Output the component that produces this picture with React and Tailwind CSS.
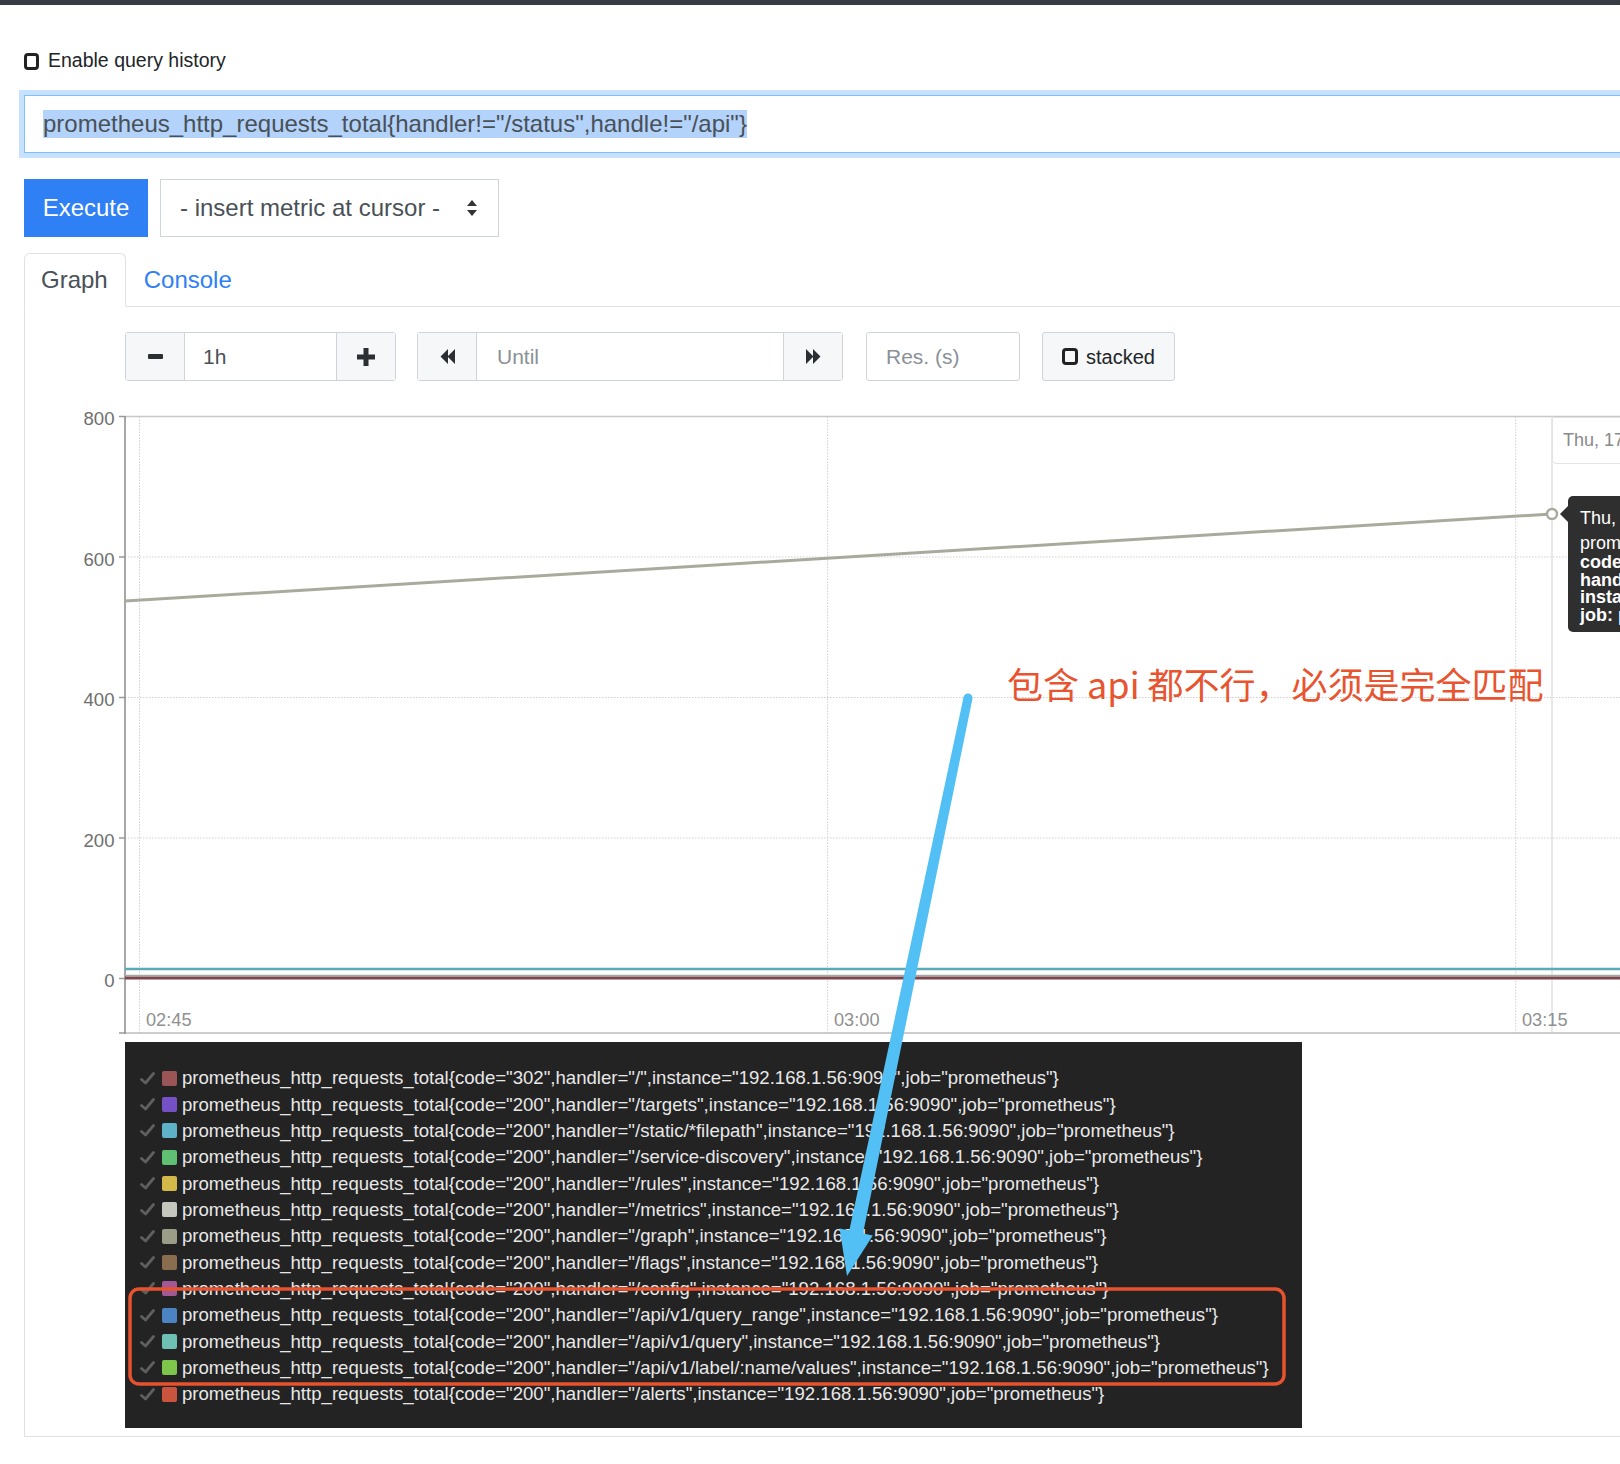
import React from 'react'

const legend = [
  ['#9a5656', '302', '/'],
  ['#7650c6', '200', '/targets'],
  ['#5eb2c8', '200', '/static/*filepath'],
  ['#5fbf72', '200', '/service-discovery'],
  ['#d2b94a', '200', '/rules'],
  ['#c5c7bd', '200', '/metrics'],
  ['#9b9d86', '200', '/graph'],
  ['#8a6d4e', '200', '/flags'],
  ['#a35896', '200', '/config'],
  ['#4c83c3', '200', '/api/v1/query_range'],
  ['#6ec0b4', '200', '/api/v1/query'],
  ['#7ec54c', '200', '/api/v1/label/:name/values'],
  ['#c9553f', '200', '/alerts'],
]

const Check = () => (
  <svg width="15" height="13" viewBox="0 0 15 13">
    <path d="M1.5 7.5 L5.5 11 L13.5 1.5" fill="none" stroke="#5f5f5f" strokeWidth="2.8" strokeLinecap="round" strokeLinejoin="round" />
  </svg>
)

const Box = () => <span className="inline-block w-[15px] h-[17px] border-[3px] border-[#222] rounded-[4px]" />

const Chart = () => {
  const grid = [176, 316.5, 457, 597.5]
  const labels = [
    ['800', 35.5],
    ['600', 176],
    ['400', 316.5],
    ['200', 457],
    ['0', 597.5],
  ]
  return (
    <svg width="1595" height="660" className="block" fontFamily="'Liberation Sans', Arial, sans-serif">
      <line x1="100" y1="35.5" x2="1595" y2="35.5" stroke="#c8c8c8" strokeWidth="1.5" />
      {grid.map(y => (
        <line key={y} x1="100" y1={y} x2="1595" y2={y} stroke="#cfcfcf" strokeWidth="1" strokeDasharray="1.5 1.5" />
      ))}
      {[114.5, 802.6, 1490.7].map(x => (
        <line key={x} x1={x} y1="35.5" x2={x} y2="652" stroke="#cfcfcf" strokeWidth="1" strokeDasharray="1.5 1.5" />
      ))}
      <line x1="1527" y1="35.5" x2="1527" y2="652" stroke="#e2e2e2" strokeWidth="1.5" />
      <line x1="100" y1="652" x2="1595" y2="652" stroke="#bdbdbd" strokeWidth="1.5" />
      <line x1="100" y1="35" x2="100" y2="653" stroke="#8a8a8a" strokeWidth="1.5" />
      {labels.map(([t, y]) => (
        <g key={t}>
          <line x1="94" y1={y} x2="100" y2={y} stroke="#999" strokeWidth="1.5" />
          <text x="89.5" y={y + 4} textAnchor="end" dominantBaseline="middle" fontSize="18.6" fill="#6f6f6f">
            {t}
          </text>
        </g>
      ))}
      <line x1="94" y1="652" x2="100" y2="652" stroke="#999" strokeWidth="1.5" />
      {[
        ['02:45', 121],
        ['03:00', 809],
        ['03:15', 1497],
      ].map(([t, x]) => (
        <text key={t} x={x} y="640" dominantBaseline="middle" fontSize="18.2" fill="#909090">
          {t}
        </text>
      ))}
      <line x1="100" y1="594.5" x2="1595" y2="594.5" stroke="#a8a8a8" strokeWidth="1.5" />
      <line x1="100" y1="597" x2="1595" y2="597" stroke="#7a474c" strokeWidth="3" />
      <line x1="100" y1="588" x2="1595" y2="588" stroke="#5aaab8" strokeWidth="2.5" />
      <path d="M100 220 L1527 133" fill="none" stroke="#a8ab9c" strokeWidth="3" />
      <circle cx="1527" cy="133" r="5" fill="#fff" stroke="#a8ab9c" strokeWidth="2.5" />
    </svg>
  )
}

const App = () => {
  return (
    <div className="relative w-[1620px] h-[1464px] overflow-hidden bg-white font-['Liberation_Sans',Arial,sans-serif] text-[#212529]">
      <div className="h-[5px] bg-[#363c41]" />
      <div className="pl-6 pt-[44px]">
        <div className="flex items-center h-[24px] gap-[9px]">
          <Box />
          <span className="text-[19.5px]">Enable query history</span>
        </div>

        <div className="mt-[22px] w-[1700px] h-[58px] border border-[#80bdff] shadow-[0_0_0_5px_rgba(0,123,255,0.22)] flex items-center pl-[18px] text-[24px] text-[#495057]">
          <span className="bg-[#b4d3fa] leading-[28px]">prometheus_http_requests_total{'{'}handler!="/status",handle!="/api"{'}'}</span>
        </div>

        <div className="mt-[26px] flex gap-[12px] h-[58px]">
          <button className="w-[124px] bg-[#2f7ff5] text-white text-[24px]">Execute</button>
          <div className="w-[339px] border border-[#ced4da] flex items-center pl-[19px] pr-[20px] justify-between text-[24px] text-[#495057]">
            <span>- insert metric at cursor -</span>
            <svg width="12" height="18" viewBox="0 0 12 18">
              <path d="M6 1 L11 7 L1 7 Z M6 17 L11 11 L1 11 Z" fill="#333" />
            </svg>
          </div>
        </div>

        <div className="mt-[16px] flex items-end w-[1700px] border-b border-[#dee2e6]">
          <div className="h-[54px] -mb-px px-4 pr-[17px] flex items-center border border-[#dee2e6] border-b-white rounded-t-[6px] bg-white text-[24px] text-[#495057]">
            Graph
          </div>
          <div className="h-[53px] px-[18px] flex items-center text-[24px] text-[#2f7ff5]">Console</div>
        </div>

        <div className="w-[1700px] border-l border-b border-[#dee2e6] pt-[25px] pb-[8px]">
          <div className="flex pl-[100px] h-[49px] text-[21px] text-[#495057]">
            <div className="flex border border-[#ced4da] rounded-[3px]">
              <div className="w-[58px] bg-[#f6f7f8] flex items-center justify-center">
                <svg width="15" height="5" viewBox="0 0 15 5">
                  <rect width="15" height="5" rx="1" fill="#2b2f33" />
                </svg>
              </div>
              <div className="w-[153px] border-x border-[#ced4da] bg-white flex items-center pl-[18px]">1h</div>
              <div className="w-[58px] bg-[#f6f7f8] flex items-center justify-center">
                <svg width="18" height="18" viewBox="0 0 18 18">
                  <path d="M6.5 0 h5 v6.5 h6.5 v5 h-6.5 v6.5 h-5 v-6.5 h-6.5 v-5 h6.5 Z" fill="#2b2f33" />
                </svg>
              </div>
            </div>
            <div className="flex ml-[21px] border border-[#ced4da] rounded-[3px]">
              <div className="w-[58px] bg-[#f6f7f8] flex items-center justify-center">
                <svg width="17" height="17" viewBox="0 0 17 17">
                  <path d="M9 1 V16 L1.5 8.5 Z M16 1 V16 L8.5 8.5 Z" fill="#2b2f33" />
                </svg>
              </div>
              <div className="w-[308px] border-x border-[#ced4da] bg-white flex items-center pl-[20px] text-[#8a9096]">Until</div>
              <div className="w-[58px] bg-[#f6f7f8] flex items-center justify-center">
                <svg width="17" height="17" viewBox="0 0 17 17">
                  <path d="M1 1 V16 L8.5 8.5 Z M8 1 V16 L15.5 8.5 Z" fill="#2b2f33" />
                </svg>
              </div>
            </div>
            <div className="ml-[23px] w-[154px] border border-[#ced4da] rounded-[3px] bg-white flex items-center pl-[19px] text-[#8a9096]">
              Res. (s)
            </div>
            <div className="ml-[22px] w-[133px] border border-[#ced4da] rounded-[3px] bg-[#f6f7f8] flex items-center pl-[19px] gap-[8px] text-[20px] text-[#212529]">
              <span className="inline-block w-[16px] h-[17px] border-[3px] border-[#222] rounded-[4px]" />
              stacked
            </div>
          </div>

          <div className="relative h-[661px]">
            <Chart />
            <div className="absolute left-[1527px] top-[36px] w-[120px] h-[47px] border border-[#e3e3e3] rounded-bl-[4px] bg-white flex items-center pl-[10px] text-[18px] text-[#8a8a8a] whitespace-nowrap">
              Thu, 17
            </div>
            <div className="absolute left-[1543px] top-[115px] w-[120px] h-[136px] bg-[#2f2f2f] rounded-[5px] pl-[12px] pt-[11px] text-white text-[18px] whitespace-nowrap">
              <div className="absolute left-[-8px] top-[10px] w-0 h-0 border-y-[8px] border-y-transparent border-r-[8px] border-r-[#2f2f2f]" />
              <div className="leading-[22px]">Thu, 17</div>
              <div className="leading-[22px] mt-[3px]">prometheus</div>
              <div className="font-bold leading-[17.7px]">code: 200</div>
              <div className="font-bold leading-[17.7px]">handler: /</div>
              <div className="font-bold leading-[17.7px]">instance: 192</div>
              <div className="font-bold leading-[17.7px]">job: prometheus</div>
            </div>
          </div>

          <div className="ml-[100px] w-[1177px] h-[386px] bg-[#232323] pt-[23px] text-[18.6px] text-[#e8e8e8]">
            {legend.map(([color, code, handler], i) => (
              <div key={i} className="flex items-center h-[26.35px] pl-[15px] whitespace-nowrap">
                <Check />
                <span className="ml-[7px] mr-[5px] w-[15px] h-[15px] rounded-[2px]" style={{ backgroundColor: color }} />
                <span>
                  prometheus_http_requests_total{'{'}code="{code}",handler="{handler}",instance="192.168.1.56:9090",job="prometheus"{'}'}
                </span>
              </div>
            ))}
          </div>
        </div>
      </div>

      {/* annotation drawn over the screenshot */}
      <div className="absolute left-[1007px] top-[662px] leading-[42px] text-[36px] text-[#e8542f] font-['Noto_Sans_CJK_SC',sans-serif] whitespace-nowrap">
        包含 api 都不行，必须是完全匹配
      </div>
      <svg className="absolute left-0 top-0 pointer-events-none" width="1620" height="1464">
        <rect x="130" y="1289" width="1154" height="95" rx="9" fill="none" stroke="#e8532f" strokeWidth="3.5" />
        <circle cx="968" cy="698" r="4.5" fill="#52c0f5" />
        <polygon
          points="972.4,698.9 863,1233.4 872.8,1235.5 847,1276 839.6,1228.5 849.3,1230.6 963.6,697.1"
          fill="#52c0f5"
        />
      </svg>
    </div>
  )
}

export default App
